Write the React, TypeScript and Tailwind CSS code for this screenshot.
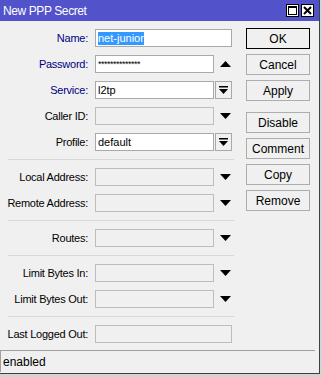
import React from "react";

const font = { fontFamily: '"Liberation Sans", Arial, sans-serif' };

function Down() {
  return (
    <svg width="11" height="6" viewBox="0 0 11 6">
      <path d="M0 0 H11 L5.5 6 Z" fill="#000" />
    </svg>
  );
}
function Up() {
  return (
    <svg width="11" height="6" viewBox="0 0 11 6">
      <path d="M0 6 H11 L5.5 0 Z" fill="#000" />
    </svg>
  );
}
function DropBtn() {
  return (
    <div className="w-[17px] h-[18px] border border-[#a9a9a9] bg-[#f0f0f0] flex items-center justify-center">
      <svg width="9" height="8" viewBox="0 0 9 8">
        <rect x="0" y="0" width="9" height="1.5" fill="#000" />
        <path d="M0 3 H9 L4.5 8 Z" fill="#000" />
      </svg>
    </div>
  );
}

type RowProps = {
  label: string;
  blue?: boolean;
  children: React.ReactNode;
};
function Row({ label, blue, children }: RowProps) {
  return (
    <div className="flex items-center h-[18px]">
      <div
        className={`w-[89px] text-right pr-[1px] text-[11px] tracking-[-0.25px] leading-none ${blue ? "text-[#000080]" : "text-black"}`}
      >
        {label}
      </div>
      <div className="ml-[6px] flex items-center">{children}</div>
    </div>
  );
}

function Input({ w, disabled, children }: { w: number; disabled?: boolean; children?: React.ReactNode }) {
  return (
    <div
      className={`h-[18px] border flex items-center px-[2px] text-[11px] ${disabled ? "bg-[#f0f0f0] border-[#bdbdbd]" : "bg-white border-[#a9a9a9]"}`}
      style={{ width: w }}
    >
      {children}
    </div>
  );
}

function Sep() {
  return <div className="ml-[8px] w-[226px] h-px bg-[#d8d8d8] my-[8px]" />;
}

function Btn({ label, def, mt }: { label: string; def?: boolean; mt?: string }) {
  return (
    <div
      className={`w-[64px] h-[21px] flex items-center justify-center text-[12px] bg-[#f0f0f0] ${def ? "border border-black" : "border border-[#adadad]"} ${mt ?? ""}`}
    >
      <div className={def ? "w-full h-full border border-[#f0f0f0] flex items-center justify-center" : ""}>{label}</div>
    </div>
  );
}

export default function App() {
  return (
    <div className="w-[322px] h-[377px] bg-[#d4d4d4] relative overflow-hidden" style={font}>
      <div className="w-[320px] h-[374px] bg-[#f0f0f0] border-r border-b border-[#404040] flex flex-col">
        <div className="h-[21px] bg-[#5252ca] flex items-center justify-between pl-[3px] pr-[5px]">
          <span className="text-white text-[12px] tracking-[-0.4px]">New PPP Secret</span>
          <div className="flex gap-[2px]">
            <div className="w-[13px] h-[13px] bg-white border border-black flex items-center justify-center">
              <div className="w-[9px] h-[9px] border border-black border-t-2" />
            </div>
            <div className="w-[13px] h-[13px] bg-white border border-black flex items-center justify-center">
              <svg width="9" height="9" viewBox="0 0 9 9">
                <path d="M1 1 L8 8 M8 1 L1 8" stroke="#000" strokeWidth="2" />
              </svg>
            </div>
          </div>
        </div>
        <div className="flex flex-1">
          <div className="w-[246px] flex flex-col pt-[8px]">
            <div className="flex flex-col gap-[8px]">
              <Row label="Name:" blue>
                <Input w={137}>
                  <span className="bg-[#3399ff] text-white leading-[13px]">net-junior</span>
                </Input>
              </Row>
              <Row label="Password:" blue>
                <Input w={119}>
                  <span className="text-[9px] tracking-[-0.5px] leading-none">**************</span>
                </Input>
                <div className="ml-[6px]"><Up /></div>
              </Row>
              <Row label="Service:" blue>
                <Input w={119}>l2tp</Input>
                <div className="ml-[1px]"><DropBtn /></div>
              </Row>
              <Row label="Caller ID:">
                <Input w={119} disabled />
                <div className="ml-[6px]"><Down /></div>
              </Row>
              <Row label="Profile:">
                <Input w={119}>default</Input>
                <div className="ml-[1px]"><DropBtn /></div>
              </Row>
            </div>
            <Sep />
            <div className="flex flex-col gap-[8px]">
              <Row label="Local Address:">
                <Input w={119} disabled />
                <div className="ml-[6px]"><Down /></div>
              </Row>
              <Row label="Remote Address:">
                <Input w={119} disabled />
                <div className="ml-[6px]"><Down /></div>
              </Row>
            </div>
            <Sep />
            <Row label="Routes:">
              <Input w={119} disabled />
              <div className="ml-[6px]"><Down /></div>
            </Row>
            <Sep />
            <div className="flex flex-col gap-[8px]">
              <Row label="Limit Bytes In:">
                <Input w={119} disabled />
                <div className="ml-[6px]"><Down /></div>
              </Row>
              <Row label="Limit Bytes Out:">
                <Input w={119} disabled />
                <div className="ml-[6px]"><Down /></div>
              </Row>
            </div>
            <Sep />
            <Row label="Last Logged Out:">
              <Input w={137} disabled />
            </Row>
          </div>
          <div className="flex flex-col pt-[7px] gap-[5px]">
            <Btn label="OK" def />
            <Btn label="Cancel" />
            <Btn label="Apply" />
            <Btn label="Disable" mt="mt-[6px]" />
            <Btn label="Comment" />
            <Btn label="Copy" />
            <Btn label="Remove" />
          </div>
        </div>
        <div className="h-[22px] mr-[4px] border-t border-l border-[#a0a0a0] flex items-center pl-[2px] text-[12px] mb-[1px]">
          enabled
        </div>
      </div>
    </div>
  );
}
